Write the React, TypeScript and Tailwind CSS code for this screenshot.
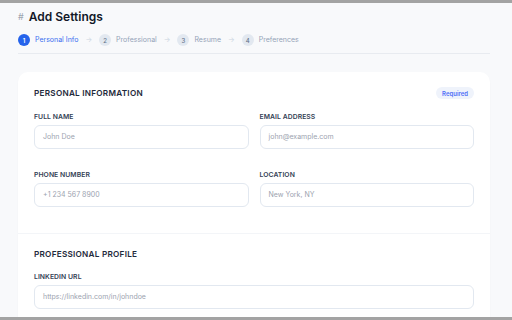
import React from "react";

const Step = ({ n, label, active }: { n: number; label: string; active?: boolean }) => (
  <div className="flex items-center gap-[5px]">
    <div
      className={
        active
          ? "w-[12px] h-[12px] rounded-full bg-[#2563eb] text-white flex items-center justify-center text-[6px] font-semibold"
          : "w-[12px] h-[12px] rounded-full bg-[#e2e8f0] text-[#64748b] flex items-center justify-center text-[6px] font-medium"
      }
    >
      {n}
    </div>
    <span className={active ? "text-[7px] text-[#3b6ff0]" : "text-[7px] text-[#94a3b8]"}>{label}</span>
  </div>
);

const Arrow = () => <span className="text-[7px] text-[#cbd5e1] mx-[7px]">→</span>;

const Field = ({ label, placeholder }: { label: string; placeholder: string }) => (
  <div className="flex flex-col">
    <div className="text-[6.8px] font-semibold text-[#334155] leading-[9px] tracking-[0.01em]">{label}</div>
    <div className="mt-[4px] h-[24px] rounded-[6px] border border-[#e2e8f0] bg-white flex items-center px-[8px]">
      <span className="text-[7px] text-[#9ca3af]">{placeholder}</span>
    </div>
  </div>
);

export default function App() {
  return (
    <div
      className="w-[512px] h-[320px] overflow-hidden flex flex-col bg-[#f8f9fb]"
      style={{ fontFamily: "Inter, 'Noto Sans', sans-serif" }}
    >
      <div className="h-[3px] bg-[#a3a3a3] shrink-0" />
      <div className="flex-1 overflow-hidden pl-[18px] pr-[22px]">
        <div className="pt-[6px] flex items-center h-[22px]">
          <span className="text-[9px] text-[#9ca3af] mr-[5px]">#</span>
          <span className="text-[12px] font-semibold text-[#111827] leading-[16px]">Add Settings</span>
        </div>
        <div className="mt-[9px] flex items-center h-[12px]">
          <Step n={1} label="Personal Info" active />
          <Arrow />
          <Step n={2} label="Professional" />
          <Arrow />
          <Step n={3} label="Resume" />
          <Arrow />
          <Step n={4} label="Preferences" />
        </div>
        <div className="mt-[7px] border-b border-[#e8ebf0]" />
        <div className="mt-[18px] bg-white rounded-[10px] shadow-[0_1px_2px_rgba(15,23,42,0.03)]">
          <div className="px-[16px] pt-[16px] pb-[26px] border-b border-[#f3f5f8]">
            <div className="flex items-center justify-between h-[10px]">
              <div className="text-[8.2px] font-semibold text-[#1e293b] tracking-[0.03em]">PERSONAL INFORMATION</div>
              <div className="h-[12px] px-[6px] rounded-full bg-[#eff3fb] text-[#4f6ef7] text-[6px] font-semibold flex items-center">
                Required
              </div>
            </div>
            <div className="mt-[14px] grid grid-cols-2 gap-x-[11px] gap-y-[21px]">
              <Field label="FULL NAME" placeholder="John Doe" />
              <Field label="EMAIL ADDRESS" placeholder="john@example.com" />
              <Field label="PHONE NUMBER" placeholder="+1 234 567 8900" />
              <Field label="LOCATION" placeholder="New York, NY" />
            </div>
          </div>
          <div className="px-[16px] pt-[15px] pb-[20px]">
            <div className="h-[10px] flex items-center">
              <div className="text-[8.2px] font-semibold text-[#1e293b] tracking-[0.03em]">PROFESSIONAL PROFILE</div>
            </div>
            <div className="mt-[13px]">
              <Field label="LINKEDIN URL" placeholder="https://linkedin.com/in/johndoe" />
            </div>
          </div>
        </div>
      </div>
      <div className="h-[3px] bg-[#a3a3a3] shrink-0" />
    </div>
  );
}
